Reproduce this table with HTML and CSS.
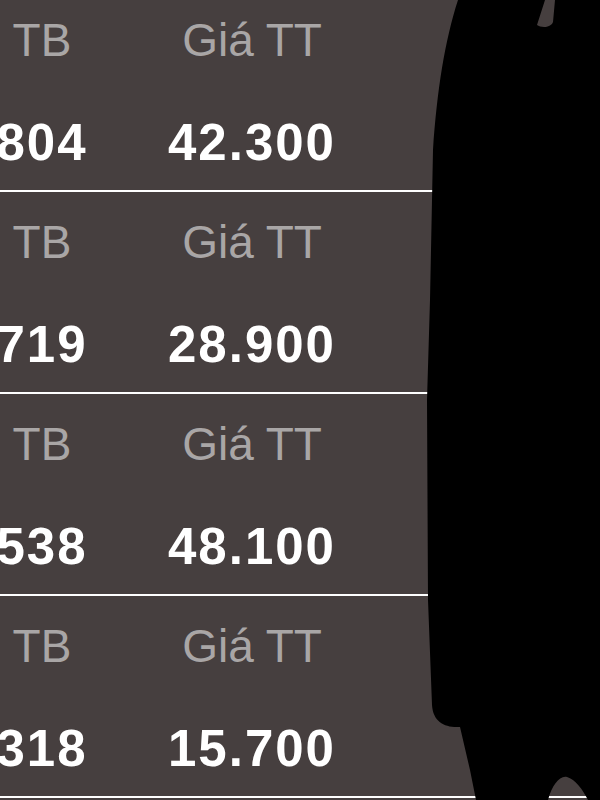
FILE: index.html
```html
<!DOCTYPE html>
<html lang="vi">
<head>
<meta charset="utf-8">
<title>Giá TT</title>
<link rel="stylesheet" href="styles.css">
</head>
<body>
<div class="list">
  <div class="row">
    <div class="cell"><span class="label">TB</span><span class="value">804</span></div>
    <div class="cell"><span class="label">Giá TT</span><span class="value">42.300</span></div>
  </div>
  <div class="row">
    <div class="cell"><span class="label">TB</span><span class="value">719</span></div>
    <div class="cell"><span class="label">Giá TT</span><span class="value">28.900</span></div>
  </div>
  <div class="row">
    <div class="cell"><span class="label">TB</span><span class="value">538</span></div>
    <div class="cell"><span class="label">Giá TT</span><span class="value">48.100</span></div>
  </div>
  <div class="row">
    <div class="cell"><span class="label">TB</span><span class="value">318</span></div>
    <div class="cell"><span class="label">Giá TT</span><span class="value">15.700</span></div>
  </div>
</div>
<svg class="redact" width="600" height="800" viewBox="0 0 600 800" aria-hidden="true">
  <path d="M458 0 C445 40 437 90 433 150 L430 300 L427 400 L428 600 L432 705 C433 722 445 728 460 727 L470 770 L476 800 L548 800 C552 785 560 775 567 777 C575 779 583 790 588 800 L600 800 L600 0 L555 0 L553 22 C551 28 541 28 537 25 L545 0 Z" fill="#000"/>
</svg>
</body>
</html>
```
FILE: styles.css
```css
html, body {
  margin: 0;
  padding: 0;
}
body {
  width: 600px;
  height: 800px;
  overflow: hidden;
  background: #463f3f;
  font-family: "Liberation Sans", Arial, sans-serif;
  position: relative;
}
.list {
  margin-top: -10px;
}
.row {
  height: 200px;
  border-bottom: 2px solid #ffffff;
  display: grid;
  grid-template-columns: 84px 168px;
  column-gap: 84px;
}
.cell {
  display: flex;
  flex-direction: column;
  align-items: center;
  white-space: nowrap;
}
.label {
  font-size: 46px;
  line-height: 46px;
  margin-top: 27px;
  color: #a9a6a6;
}
.value {
  font-size: 51px;
  line-height: 51px;
  margin-top: 54px;
  font-weight: bold;
  letter-spacing: 2px;
  color: #ffffff;
}
.redact {
  position: absolute;
  left: 0;
  top: 0;
}
```
